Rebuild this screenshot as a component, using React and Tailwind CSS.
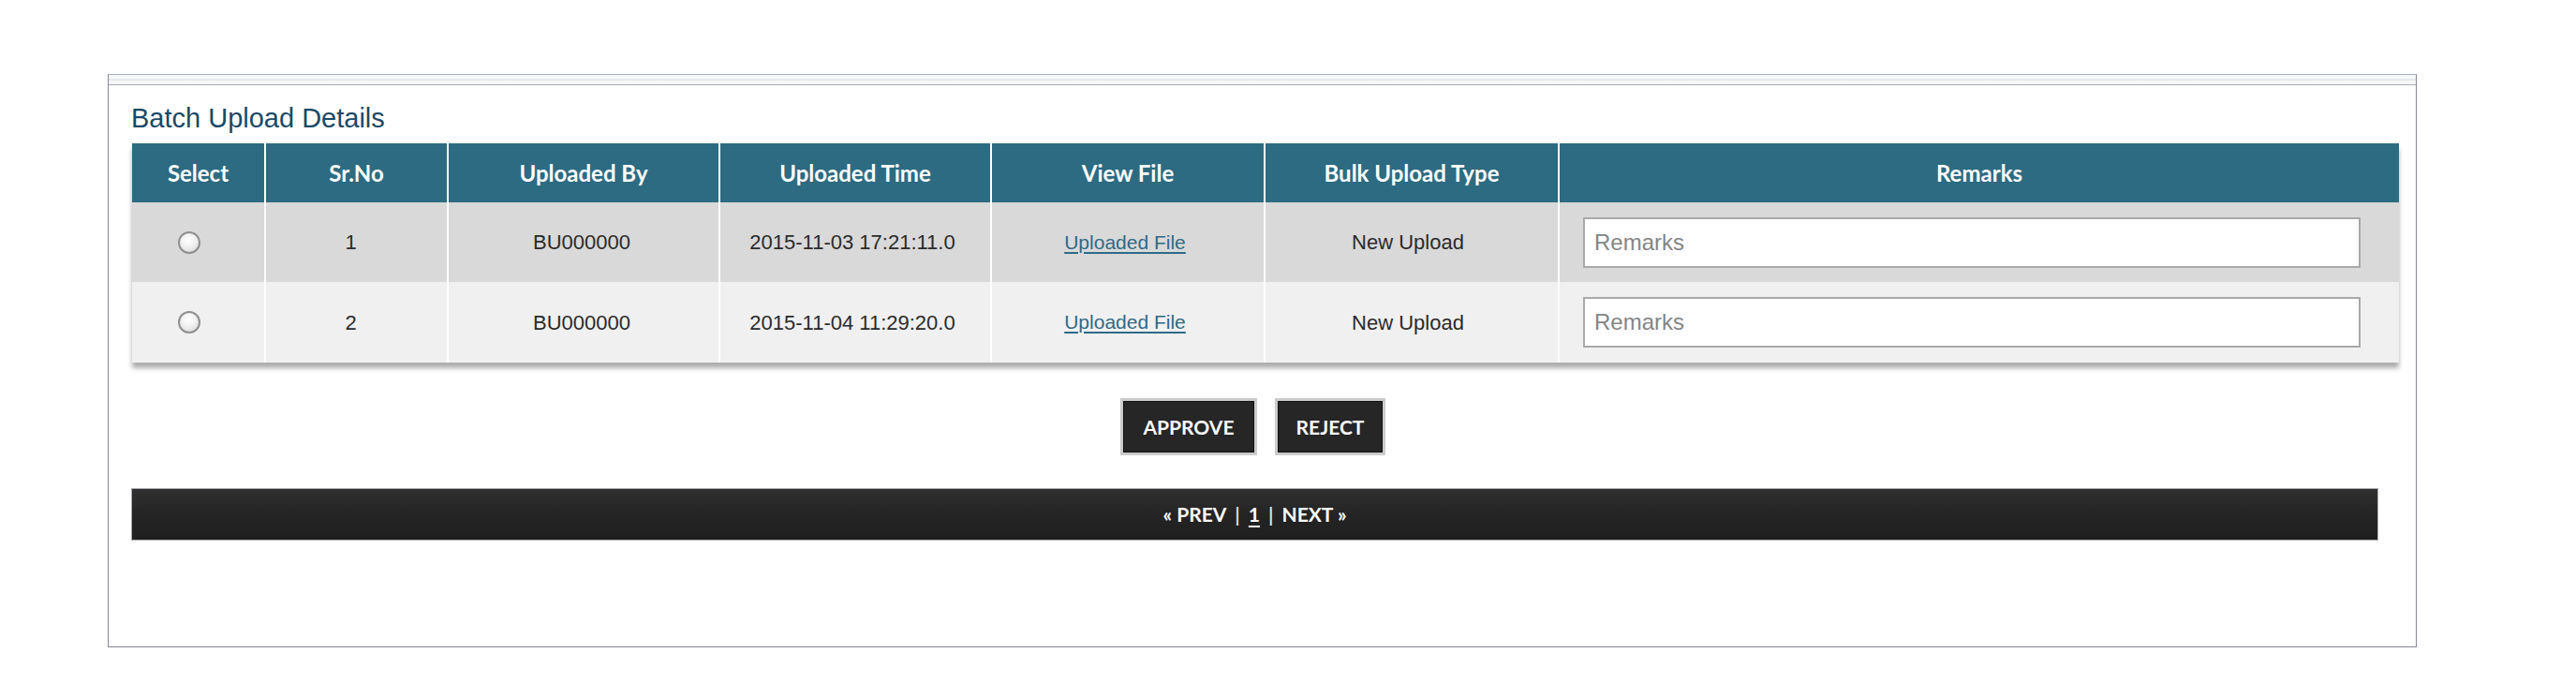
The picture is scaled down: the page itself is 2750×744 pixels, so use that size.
import React from 'react';

const rows = [
    { sr: 1, by: 'BU000000', time: '2015-11-03 17:21:11.0', type: 'New Upload', bg: 'bg-[#d9d9d9]', h: 'h-[85px]' },
    { sr: 2, by: 'BU000000', time: '2015-11-04 11:29:20.0', type: 'New Upload', bg: 'bg-[#f0f0f0]', h: 'h-[86px]' },
];

const cols = 'grid grid-cols-[143px_195px_290px_290px_292px_314px_896px]';
const cell = 'flex items-center justify-center border-r-2 border-white';

const Radio = () => (
    <span className="block w-[24px] h-[24px] rounded-full border-2 border-[#8f8f8f] bg-[radial-gradient(circle_at_45%_35%,#ffffff_0%,#f2f2f2_40%,#d4d4d4_100%)]" />
);

const App = () => {
    return (
        <div className="w-[2750px] h-[744px] bg-white pt-[79px] pl-[115px]" style={{ fontFamily: '"Liberation Sans", Arial, sans-serif' }}>
            <div className="w-[2465px] h-[612px] border border-[#8b8795] border-t-[#a7afbf] bg-white">
                {/* top double line band */}
                <div className="h-[11px] border-b border-[#a3abba] bg-[linear-gradient(to_bottom,#f6f7f9_0%,#f6f7f9_40%,#d3d8e0_50%,#f6f7f9_60%,#f6f7f9_100%)]" />

                <div className="pl-[24px] pr-[17px]">
                    <div className="h-[62px] flex items-center pt-[8px]">
                        <h2 className="text-[29px] leading-none text-[#1a4967]">Batch Upload Details</h2>
                    </div>

                    {/* table */}
                    <div className="w-[2420px] ml-[1px] shadow-[0_6px_5px_rgba(0,0,0,0.32)]">
                        <div className={`${cols} h-[63px] bg-[#2d6b82] text-white text-[24px] font-bold`} style={{ fontFamily: 'Lato, "Open Sans", sans-serif' }}>
                            <div className={cell}>Select</div>
                            <div className={cell}>Sr.No</div>
                            <div className={cell}>Uploaded By</div>
                            <div className={cell}>Uploaded Time</div>
                            <div className={cell}>View File</div>
                            <div className={cell}>Bulk Upload Type</div>
                            <div className="flex items-center justify-center">Remarks</div>
                        </div>
                        {rows.map((r) => (
                            <div key={r.sr} className={`${cols} ${r.h} ${r.bg} text-[22px] text-[#2b2b2b]`}>
                                <div className={`${cell} pr-[20px]`}><Radio /></div>
                                <div className={`${cell} pr-[12px]`}>{r.sr}</div>
                                <div className={`${cell} pr-[4px]`}>{r.by}</div>
                                <div className={`${cell} pr-[6px]`}>{r.time}</div>
                                <div className={`${cell} pr-[6px]`}>
                                    <a href="#" className="text-[21px] text-[#2f6a87] underline underline-offset-[3px] decoration-[2px]">Uploaded File</a>
                                </div>
                                <div className={`${cell} pr-[8px]`}>{r.type}</div>
                                <div className="flex items-center pl-[25px] pr-[41px]">
                                    <input
                                        type="text"
                                        placeholder="Remarks"
                                        className="w-full h-[54px] bg-white border-2 border-[#a9a9a9] px-[10px] text-[24px] text-[#333] placeholder:text-[#858585] outline-none"
                                    />
                                </div>
                            </div>
                        ))}
                    </div>

                    {/* action buttons */}
                    <div className="flex justify-center gap-[19px] mt-[38px] mr-[27px]" style={{ fontFamily: 'Lato, "Open Sans", sans-serif' }}>
                        <button className="w-[146px] h-[61px] border-[3px] border-[#cbcbcb] bg-[#262626] text-white text-[21px] font-bold shadow-[inset_0_0_0_1px_#111]">
                            APPROVE
                        </button>
                        <button className="w-[118px] h-[61px] border-[3px] border-[#cbcbcb] bg-[#262626] text-white text-[21px] font-bold shadow-[inset_0_0_0_1px_#111]">
                            REJECT
                        </button>
                    </div>

                    {/* pagination */}
                    <div
                        className="mt-[35px] w-[2399px] h-[56px] border border-[#a9a9b0] bg-[linear-gradient(to_bottom,#303030_0%,#242424_50%,#1f1f1f_100%)] flex items-center justify-center text-white text-[21px] font-bold"
                        style={{ fontFamily: 'Lato, "Open Sans", sans-serif' }}
                    >
                        <span>« PREV</span>
                        <span className="mx-[9px] text-[#d8d8d8]">|</span>
                        <a href="#" className="underline underline-offset-[4px]">1</a>
                        <span className="mx-[9px] text-[#cfe3d8]">|</span>
                        <span>NEXT »</span>
                    </div>
                </div>
            </div>
        </div>
    );
};

export default App;
